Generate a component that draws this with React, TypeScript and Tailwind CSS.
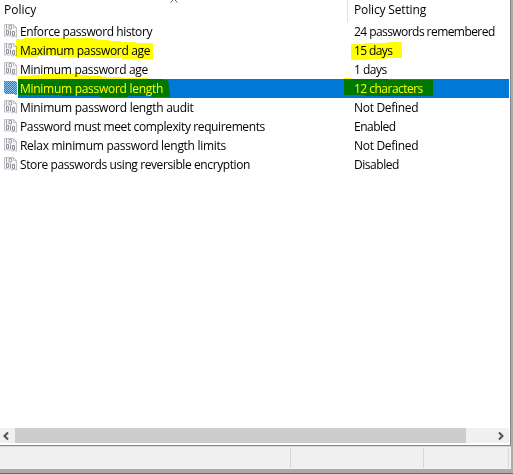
type Row = { policy: string; setting: string; pt: string; st: string; selected?: boolean };

const rows: Row[] = [
  { policy: 'Enforce password history', setting: '24 passwords remembered', pt: 'tracking-[-0.4px]', st: 'tracking-[-0.56px]' },
  { policy: 'Maximum password age', setting: '15 days', pt: 'tracking-[-0.33px]', st: 'tracking-[-0.6px]' },
  { policy: 'Minimum password age', setting: '1 days', pt: 'tracking-[-0.31px]', st: 'tracking-[-0.5px]' },
  { policy: 'Minimum password length', setting: '12 characters', pt: 'tracking-[-0.28px]', st: 'tracking-[-0.52px]', selected: true },
  { policy: 'Minimum password length audit', setting: 'Not Defined', pt: 'tracking-[-0.27px]', st: 'tracking-[-0.3px]' },
  { policy: 'Password must meet complexity requirements', setting: 'Enabled', pt: 'tracking-[-0.38px]', st: 'tracking-[-0.5px]' },
  { policy: 'Relax minimum password length limits', setting: 'Not Defined', pt: 'tracking-[-0.29px]', st: 'tracking-[-0.3px]' },
  { policy: 'Store passwords using reversible encryption', setting: 'Disabled', pt: 'tracking-[-0.4px]', st: 'tracking-[-0.45px]' },
];

const PAGE = 'M0.5 0.5H9.5L12.5 3.5V13.2L10.5 12.2L8.5 13.2L6.5 11.7L4.5 12.2L2.5 11.7L0.5 12.2Z';

function PolicyIcon({ selected }: { selected?: boolean }) {
  if (selected) {
    return (
      <svg width="14" height="14" viewBox="0 0 14 14" shapeRendering="crispEdges">
        <defs>
          <pattern id="dither" width="2" height="2" patternUnits="userSpaceOnUse">
            <rect width="2" height="2" fill="#8cc2f0" />
            <rect width="1" height="1" fill="#1583da" />
            <rect x="1" y="1" width="1" height="1" fill="#1583da" />
          </pattern>
        </defs>
        <path d="M0 0H12L13 2V14H11L10 13H2L0 12Z" fill="url(#dither)" />
      </svg>
    );
  }
  return (
    <svg width="14" height="14" viewBox="0 0 14 14" fill="none">
      <path d={PAGE} fill="#f7f7f8" stroke="#c2c2c4" />
      <path d="M9.5 0.5V3.5H12.5" stroke="#c2c2c4" />
      <path d="M2.5 1V5.5M5 1.5H7.5V5H5Z" stroke="#a0a0aa" />
      <path d="M2.5 6.5H4.5V10.5H2.5ZM6.5 6.5V11M8.5 7.5H10.5V11.5H8.5Z" stroke="#8f8f9c" />
    </svg>
  );
}

function MarkerStrokes() {
  return (
    <svg
      className="pointer-events-none absolute left-0 top-0 mix-blend-multiply"
      width="513"
      height="110"
      fill="#ffff00"
      shapeRendering="crispEdges"
    >
      <path d="M16 39H24V38H93V39H98V40H109V41H121V42H136V43H153V59H122V58H100V57H60V56H38V57H16Z" />
      <path d="M18 76H31V75H42V74H80V75H88V76H102V77H121V78H148V79H163V80H168V83H169V91H170V97H151V96H128V97H100V96H62V95H18Z" />
      <path d="M351 44H365V43H387V42H402V58H385V59H371V60H351Z" />
      <path d="M344 78H352V79H388V80H433V96H364V95H344Z" />
    </svg>
  );
}

export default function App() {
  return (
    <div className="relative flex h-[474px] w-[513px] flex-col overflow-hidden bg-[#ababab] font-['Open_Sans','Noto_Sans',sans-serif] text-[12px] leading-[19px] text-black">
      <div className="flex h-[446px] w-[511px] flex-col border-b border-r border-[#828790] bg-white">
        <div className="flex h-[22px] shrink-0">
          <div className="w-[347px] pl-[4px]">Policy</div>
          <div className="border-l border-[#e2e2e2] pl-[6px] tracking-[-0.15px]">Policy Setting</div>
        </div>
        {rows.map((r) => (
          <div key={r.policy} className="flex h-[19px] w-[509px] shrink-0">
            <div className="w-[18px] shrink-0 pl-[4px] pt-[2px]">
              <PolicyIcon selected={r.selected} />
            </div>
            <div className={`flex grow whitespace-nowrap ${r.selected ? 'bg-[#0078d7] text-white' : ''}`}>
              <div className={`w-[336px] shrink-0 pl-[2px] ${r.pt}`}>{r.policy}</div>
              <div className={r.st}>{r.setting}</div>
            </div>
          </div>
        ))}
        <div className="grow" />
        <div className="mb-[2px] flex h-[15px] w-[509px] shrink-0 bg-[#f0f0f0]">
          <div className="flex w-[15px] pl-[2px] pt-[4px]">
            <svg width="8" height="8" viewBox="0 0 8 8" fill="none" stroke="#505050" strokeWidth="2">
              <path d="M6 0.5L2.5 4L6 7.5" />
            </svg>
          </div>
          <div className="w-[451px] bg-[#cdcdcd]" />
          <div className="flex grow justify-end pr-[4px] pt-[4px]">
            <svg width="8" height="8" viewBox="0 0 8 8" fill="none" stroke="#505050" strokeWidth="2">
              <path d="M2 0.5L5.5 4L2 7.5" />
            </svg>
          </div>
        </div>
      </div>
      <div className="flex h-[23px] w-[511px] border-t border-[#dadada] bg-[#f0f0f0] pb-[1px] pt-[1px]">
        <div className="w-[291px] border-r border-[#d7d7d7]" />
        <div className="w-[133px] border-r border-[#d7d7d7]" />
        <div className="w-[85px] border-r border-[#d7d7d7]" />
      </div>
      <div className="mt-auto h-[1px] bg-[#696969]" />
      <svg className="absolute left-[170px] top-0" width="8" height="3" fill="none" stroke="#606060">
        <path d="M0.5 2.5L4 -1L7.5 2.5" />
      </svg>
      <MarkerStrokes />
    </div>
  );
}
